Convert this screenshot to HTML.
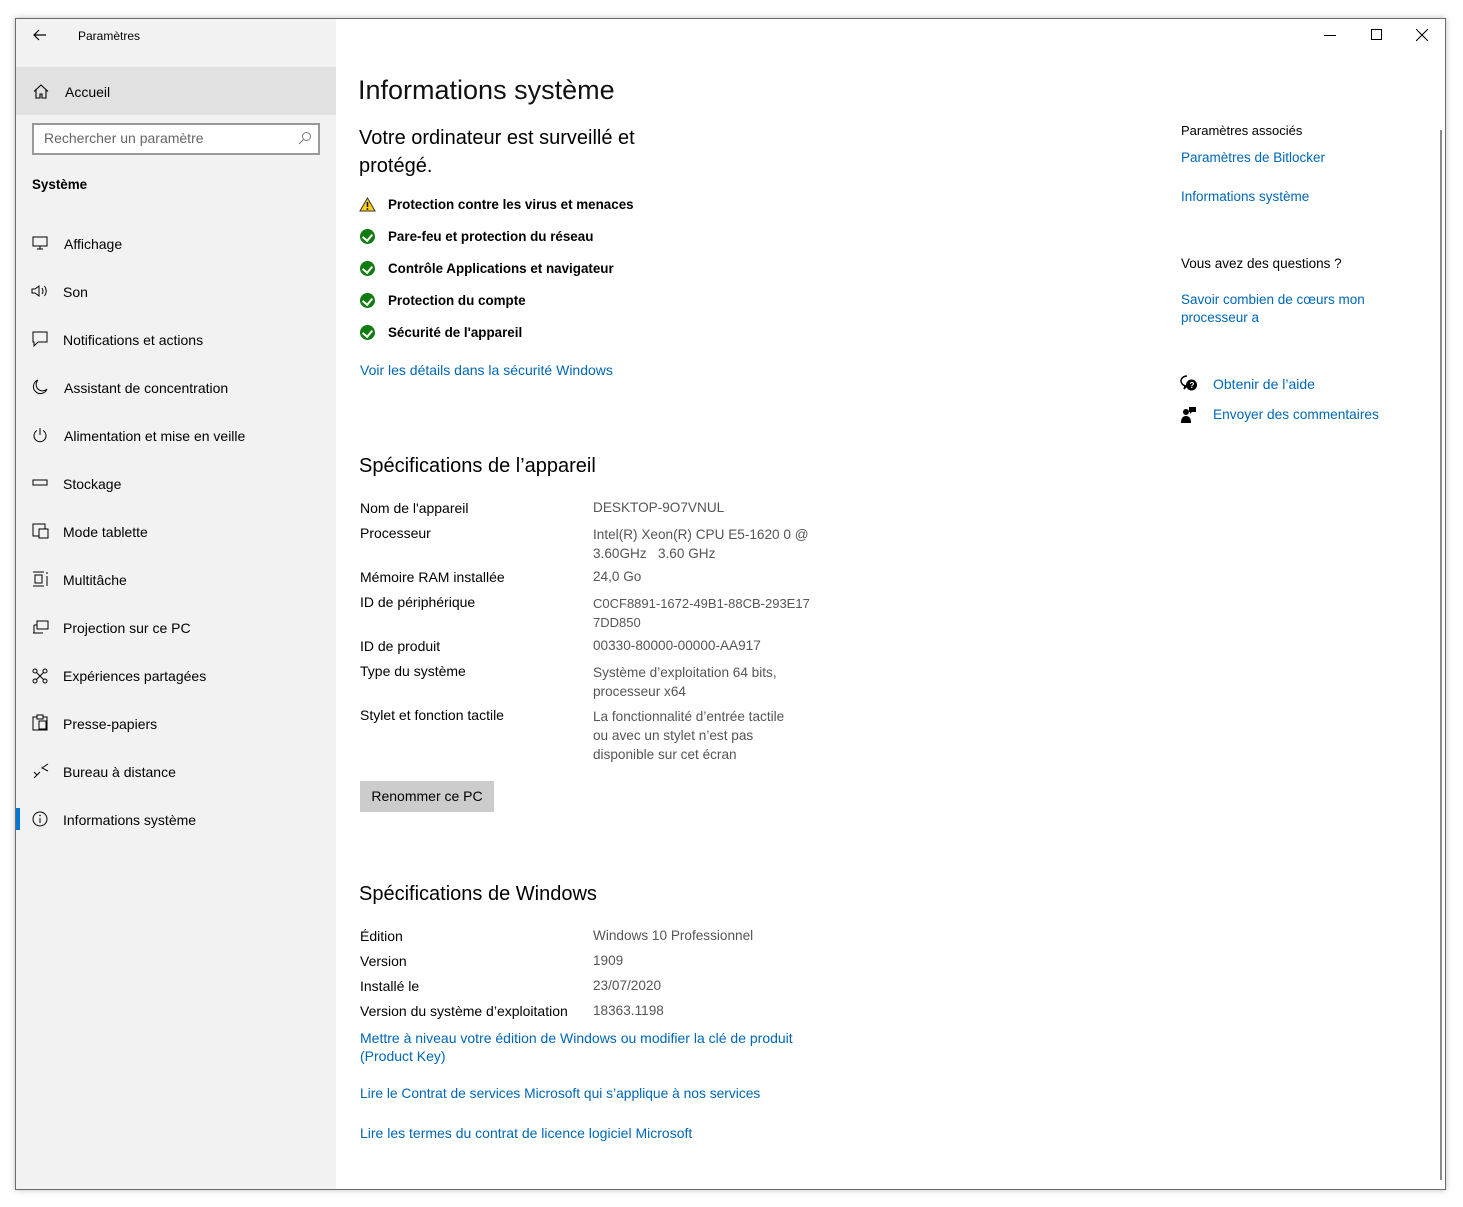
<!DOCTYPE html>
<html><head><meta charset="utf-8"><style>
*{margin:0;padding:0;box-sizing:border-box}
body{width:1463px;height:1207px;background:#fff;font-family:"Liberation Sans",sans-serif;color:#000;position:relative;overflow:hidden}
.a{position:absolute;white-space:nowrap}
.win{position:absolute;left:15px;top:18px;width:1431px;height:1172px;border:1px solid #6b6b6b;background:#fff;box-shadow:0 0 6px rgba(0,0,0,.25)}
.side{position:absolute;left:16px;top:19px;width:320px;height:1170px;background:#f2f2f2}
.t14{font-size:14px}
.b{font-weight:bold;font-size:13.4px}
.lk{color:#0067b8;font-size:14px}
.g{color:#555;font-size:13.6px}
.ic{position:absolute}
.chk{position:absolute;width:15px;height:15px;border-radius:50%;background:#107c10}
.chk:after{content:"";position:absolute;left:4px;top:3px;width:5px;height:7px;border:solid #fff;border-width:0 2px 2px 0;transform:rotate(40deg)}
</style></head><body>
<div class="win"></div>
<div class="side"></div>
<div class="a" style="left:16px;top:67px;width:320px;height:48px;background:#e1e1e1"></div>
<div class="a" style="left:16px;top:808px;width:4px;height:22px;background:#0078d7"></div>
<div class="a" style="left:1440px;top:130px;width:2px;height:1050px;background:#8a8a8a"></div>

<svg class="ic" style="left:33px;top:28px" width="14" height="14" viewBox="0 0 14 14"><path d="M13 7H1M6 2L1 7l5 5" fill="none" stroke="#000" stroke-width="1.2"/></svg>
<div class="a" style="left:78px;top:29px;font-size:12px">Paramètres</div>
<div class="a" style="left:1324px;top:35px;width:12px;height:1px;background:#000"></div>
<div class="a" style="left:1371px;top:29px;width:11px;height:11px;border:1px solid #000"></div>
<svg class="ic" style="left:1416px;top:29px" width="12" height="12"><path d="M0 0L12 12M12 0L0 12" stroke="#000" stroke-width="1.1"/></svg>

<svg class="ic" style="left:33px;top:84px" width="16" height="15" viewBox="0 0 16 15"><path d="M1 7.5L8 1l7 6.5M3 6v8h4v-4h2v4h4V6" fill="none" stroke="#000" stroke-width="1.1"/></svg>
<div class="a t14" style="left:65px;top:84px">Accueil</div>
<div class="a" style="left:32px;top:123px;width:288px;height:32px;border:2px solid #999;background:#fff"></div>
<div class="a t14" style="left:44px;top:130px;color:#666">Rechercher un paramètre</div>
<svg class="ic" style="left:298px;top:131px" width="14" height="14"><circle cx="8.5" cy="5.5" r="4" fill="none" stroke="#777"/><path d="M5.5 8.5L1 13" stroke="#777"/></svg>
<div class="a t14" style="left:32px;top:177px;font-weight:bold;font-size:13.4px">Système</div>

<svg class="ic" style="left:32px;top:236px" width="16" height="14"><rect x="1" y="1" width="14" height="9" fill="none" stroke="#000"/><path d="M8 10v3M5 13h6" stroke="#000"/></svg>
<div class="a t14" style="left:64px;top:236px">Affichage</div>
<svg class="ic" style="left:31px;top:284px" width="18" height="14"><path d="M1 5h3l4-3v10l-4-3H1z" fill="none" stroke="#000"/><path d="M11 4q2 3 0 6M13.5 2q3.5 5 0 10" fill="none" stroke="#000"/></svg>
<div class="a t14" style="left:63px;top:284px">Son</div>
<svg class="ic" style="left:32px;top:331px" width="16" height="16"><path d="M1 1h14v10H6l-4 4v-4H1z" fill="none" stroke="#000"/></svg>
<div class="a t14" style="left:63px;top:332px">Notifications et actions</div>
<svg class="ic" style="left:32px;top:379px" width="16" height="16"><path d="M6 1a7 7 0 1 0 9 9A6 6 0 0 1 6 1z" fill="none" stroke="#000"/></svg>
<div class="a t14" style="left:64px;top:380px">Assistant de concentration</div>
<svg class="ic" style="left:32px;top:427px" width="16" height="16"><path d="M5 3.5a6 6 0 1 0 6 0M8 1v7" fill="none" stroke="#000"/></svg>
<div class="a t14" style="left:64px;top:428px">Alimentation et mise en veille</div>
<svg class="ic" style="left:32px;top:478px" width="16" height="10"><rect x="1" y="2" width="14" height="5" fill="none" stroke="#000"/></svg>
<div class="a t14" style="left:63px;top:476px">Stockage</div>
<svg class="ic" style="left:32px;top:523px" width="17" height="16"><rect x="1" y="1" width="12" height="12" fill="none" stroke="#000"/><rect x="7" y="6" width="9" height="9" fill="#f2f2f2" stroke="#000"/></svg>
<div class="a t14" style="left:63px;top:524px">Mode tablette</div>
<svg class="ic" style="left:32px;top:571px" width="17" height="16"><path d="M1 1h11M1 15h11M3 4h7v8H3zM15 1v2M15 5v10" fill="none" stroke="#000"/></svg>
<div class="a t14" style="left:63px;top:572px">Multitâche</div>
<svg class="ic" style="left:32px;top:620px" width="17" height="14"><rect x="5" y="1" width="11" height="8" fill="none" stroke="#000"/><path d="M1 13h10M2 5h3M2 5v8" fill="none" stroke="#000"/></svg>
<div class="a t14" style="left:63px;top:620px">Projection sur ce PC</div>
<svg class="ic" style="left:32px;top:668px" width="16" height="16"><circle cx="3" cy="3" r="2" fill="none" stroke="#000"/><circle cx="13" cy="3" r="2" fill="none" stroke="#000"/><circle cx="3" cy="13" r="2" fill="none" stroke="#000"/><circle cx="13" cy="13" r="2" fill="none" stroke="#000"/><path d="M4.5 4.5l7 7M11.5 4.5l-7 7" stroke="#000"/></svg>
<div class="a t14" style="left:63px;top:668px">Expériences partagées</div>
<svg class="ic" style="left:32px;top:714px" width="16" height="17"><rect x="1" y="3" width="14" height="13" fill="none" stroke="#000"/><rect x="5" y="1" width="6" height="4" fill="#f2f2f2" stroke="#000"/><rect x="7" y="7" width="7" height="8" fill="none" stroke="#000"/></svg>
<div class="a t14" style="left:63px;top:716px">Presse-papiers</div>
<svg class="ic" style="left:33px;top:763px" width="16" height="16"><path d="M1 15l6-6M1 9l3 3M15 1L9 5l6 3" fill="none" stroke="#000"/></svg>
<div class="a t14" style="left:63px;top:764px">Bureau à distance</div>
<svg class="ic" style="left:32px;top:811px" width="16" height="16"><circle cx="8" cy="8" r="7" fill="none" stroke="#000"/><path d="M8 7v5" stroke="#000"/><circle cx="8" cy="4.5" r=".8"/></svg>
<div class="a t14" style="left:63px;top:812px">Informations système</div>

<div class="a" style="left:358px;top:75px;font-size:27px;color:#111">Informations système</div>
<div class="a" style="left:359px;top:124px;font-size:20px;line-height:28px">Votre ordinateur est surveillé et<br>protégé.</div>
<svg class="ic" style="left:359px;top:197px" width="17" height="15"><path d="M8.5 1L16 14H1z" fill="#fcd116" stroke="#333"/><path d="M8.5 5v5" stroke="#000" stroke-width="1.5"/><circle cx="8.5" cy="12" r=".9"/></svg>
<div class="a b" style="left:388px;top:197px">Protection contre les virus et menaces</div>
<div class="chk" style="left:360px;top:229px"></div><div class="a b" style="left:388px;top:229px">Pare-feu et protection du réseau</div>
<div class="chk" style="left:360px;top:261px"></div><div class="a b" style="left:388px;top:261px">Contrôle Applications et navigateur</div>
<div class="chk" style="left:360px;top:293px"></div><div class="a b" style="left:388px;top:293px">Protection du compte</div>
<div class="chk" style="left:360px;top:325px"></div><div class="a b" style="left:388px;top:325px">Sécurité de l'appareil</div>
<div class="a lk" style="left:360px;top:362px">Voir les détails dans la sécurité Windows</div>

<div class="a" style="left:359px;top:455px;font-size:20px">Spécifications de l’appareil</div>
<div class="a t14" style="left:360px;top:500px">Nom de l'appareil</div><div class="a g" style="left:593px;top:500px">DESKTOP-9O7VNUL</div>
<div class="a t14" style="left:360px;top:525px">Processeur</div><div class="a g" style="left:593px;top:525px;line-height:19px">Intel(R) Xeon(R) CPU E5-1620 0 @<br>3.60GHz &nbsp; 3.60 GHz</div>
<div class="a t14" style="left:360px;top:569px">Mémoire RAM installée</div><div class="a g" style="left:593px;top:569px">24,0 Go</div>
<div class="a t14" style="left:360px;top:594px">ID de périphérique</div><div class="a g" style="left:593px;top:594px;line-height:19px;font-size:13px">C0CF8891-1672-49B1-88CB-293E17<br>7DD850</div>
<div class="a t14" style="left:360px;top:638px">ID de produit</div><div class="a g" style="left:593px;top:638px">00330-80000-00000-AA917</div>
<div class="a t14" style="left:360px;top:663px">Type du système</div><div class="a g" style="left:593px;top:663px;line-height:19px">Système d’exploitation 64 bits,<br>processeur x64</div>
<div class="a t14" style="left:360px;top:707px">Stylet et fonction tactile</div><div class="a g" style="left:593px;top:707px;line-height:19px">La fonctionnalité d’entrée tactile<br>ou avec un stylet n’est pas<br>disponible sur cet écran</div>
<div class="a t14" style="left:360px;top:781px;width:134px;height:31px;background:#ccc;text-align:center;line-height:31px">Renommer ce PC</div>

<div class="a" style="left:359px;top:883px;font-size:20px">Spécifications de Windows</div>
<div class="a t14" style="left:360px;top:928px">Édition</div><div class="a g" style="left:593px;top:928px">Windows 10 Professionnel</div>
<div class="a t14" style="left:360px;top:953px">Version</div><div class="a g" style="left:593px;top:953px">1909</div>
<div class="a t14" style="left:360px;top:978px">Installé le</div><div class="a g" style="left:593px;top:978px">23/07/2020</div>
<div class="a t14" style="left:360px;top:1003px">Version du système d’exploitation</div><div class="a g" style="left:593px;top:1003px">18363.1198</div>
<div class="a lk" style="left:360px;top:1029px;line-height:18px">Mettre à niveau votre édition de Windows ou modifier la clé de produit<br>(Product Key)</div>
<div class="a lk" style="left:360px;top:1086px;font-size:13.8px">Lire le Contrat de services Microsoft qui s’applique à nos services</div>
<div class="a lk" style="left:360px;top:1125px">Lire les termes du contrat de licence logiciel Microsoft</div>

<div class="a t14" style="left:1181px;top:123px;font-size:13px">Paramètres associés</div>
<div class="a lk" style="left:1181px;top:150px;font-size:13.5px">Paramètres de Bitlocker</div>
<div class="a lk" style="left:1181px;top:189px;font-size:13.5px">Informations système</div>
<div class="a t14" style="left:1181px;top:256px;font-size:13.5px">Vous avez des questions ?</div>
<div class="a lk" style="left:1181px;top:291px;line-height:18px;font-size:13.5px">Savoir combien de cœurs mon<br>processeur a</div>
<svg class="ic" style="left:1180px;top:375px" width="18" height="17"><path d="M7 1a6 5 0 1 0 0 10l-3 3 1-3" fill="none" stroke="#000" stroke-width="1.4"/><circle cx="11.5" cy="10" r="5.5"/><text x="9.5" y="13" font-size="8" fill="#fff" font-family="Liberation Sans" font-weight="bold">?</text></svg>
<div class="a lk" style="left:1213px;top:376px">Obtenir de l’aide</div>
<svg class="ic" style="left:1181px;top:406px" width="16" height="18"><circle cx="5" cy="6" r="3"/><path d="M0 17q0-7 5-7t5 7z"/><path d="M8 1h7v5h-4l-2 2v-2H8z"/></svg>
<div class="a lk" style="left:1213px;top:407px;font-size:13.7px">Envoyer des commentaires</div>
</body></html>
